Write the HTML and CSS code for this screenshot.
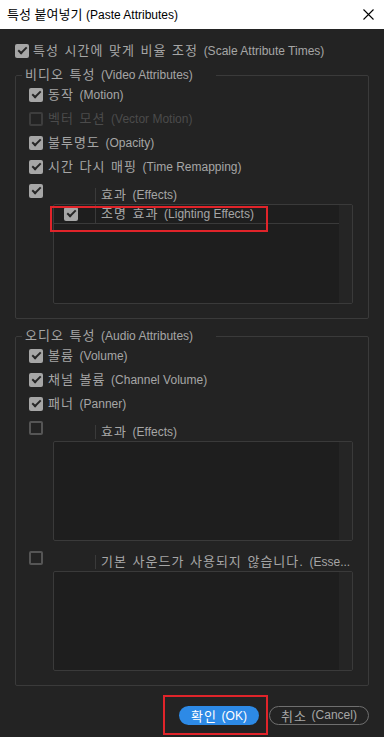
FILE: index.html
```html
<!DOCTYPE html>
<html lang="ko">
<head>
  <meta charset="UTF-8">
  <title>특성 붙여넣기</title>
  <link rel="stylesheet" href="styles.css">
</head>
<body>
<div class="titlebar">
  <span>특성 붙여넣기 <span class="en">(Paste Attributes)</span></span>
  <svg class="close" width="11" height="11" viewBox="0 0 11 11">
    <path d="M0.5 0.5 L10.5 10.5 M10.5 0.5 L0.5 10.5" stroke="#000" stroke-width="1.1" fill="none"/>
  </svg>
</div>

<div class="dialog">
  <div class="check top-check"><span class="box on"></span>특성 시간에 맞게 비율 조정 <span class="en">(Scale Attribute Times)</span></div>

  <!--비디오 특성-->
  <fieldset class="group">
    <legend>비디오 특성 <span class="en">(Video Attributes)</span></legend>
    <div class="check"><span class="box on"></span>동작 <span class="en">(Motion)</span></div>
    <div class="check dim"><span class="box off"></span>벡터 모션 <span class="en">(Vector Motion)</span></div>
    <div class="check"><span class="box on"></span>불투명도 <span class="en">(Opacity)</span></div>
    <div class="check"><span class="box on"></span>시간 다시 매핑 <span class="en">(Time Remapping)</span></div>
    <div class="listhead"><span class="box on"></span><span class="col">효과 <span class="en">(Effects)</span></span></div>
    <div class="list">
      <div class="list-main">
        <div class="list-row marked"><span class="box on"></span><span class="col">조명 효과 <span class="en">(Lighting Effects)</span></span></div>
      </div>
      <div class="list-scroll"></div>
    </div>
  </fieldset>

  <!--오디오 특성-->
  <fieldset class="group audio">
    <legend>오디오 특성 <span class="en">(Audio Attributes)</span></legend>
    <div class="check"><span class="box on"></span>볼륨 <span class="en">(Volume)</span></div>
    <div class="check"><span class="box on"></span>채널 볼륨 <span class="en">(Channel Volume)</span></div>
    <div class="check"><span class="box on"></span>패너 <span class="en">(Panner)</span></div>
    <div class="listhead"><span class="box off"></span><span class="col">효과 <span class="en">(Effects)</span></span></div>
    <div class="list">
      <div class="list-main"></div>
      <div class="list-scroll"></div>
    </div>
    <div class="listhead second"><span class="box off"></span><span class="col">기본 사운드가 사용되지 않습니다. <span class="en">(Esse...</span></span></div>
    <div class="list">
      <div class="list-main"></div>
      <div class="list-scroll"></div>
    </div>
  </fieldset>

  <div class="buttons">
    <div class="ok-mark"><button class="btn btn-ok">확인 <span class="en">(OK)</span></button></div>
    <button class="btn btn-cancel">취소 <span class="en">(Cancel)</span></button>
  </div>
</div>
</body>
</html>
```

FILE: styles.css
```css
*{
  margin: 0;
  padding: 0;
  box-sizing: border-box;
}
body{
  width: 384px;
  height: 737px;
  overflow: hidden;
  background: #232323;
  font-family: "Liberation Sans", "Noto Sans CJK KR", sans-serif;
  font-size: 13px;
  line-height: 16px;
  color: #a6a6a6;
}
.en{
  font-size: 12px;
  letter-spacing: 0;
  word-spacing: 0;
}
/*제목 표시줄*/
.titlebar{
  height: 29px;
  background: #fff;
  color: #000;
  display: flex;
  align-items: center;
  justify-content: space-between;
  padding: 0 10px 0 7px;
}
.close{
  margin-top: -1px;
}
.dialog{
  padding: 0 15px;
  letter-spacing: 1px;
  word-spacing: 1px;
}
.check{
  display: flex;
  align-items: center;
  height: 24px;
  white-space: pre;
}
.top-check{
  margin-top: 10px;
}
.top-check .box{
  margin-right: 4px;
}
/*체크박스*/
.box{
  position: relative;
  flex: none;
  width: 14px;
  height: 14px;
  border-radius: 2px;
  background: #a6a6a6;
  margin-right: 5px;
}
.box.on::after{
  content: "";
  position: absolute;
  left: 3px;
  top: 3px;
  width: 7px;
  height: 3px;
  border-left: 2px solid #262626;
  border-bottom: 2px solid #262626;
  transform: rotate(-45deg);
}
.box.off{
  background: transparent;
  border: 2px solid #555;
}
.dim{
  color: #4b4b4b;
}
.dim .box.off{
  border-color: #3d3d3d;
}
/*그룹 상자*/
.group{
  border: 1px solid #3a3a3a;
  border-radius: 2px;
  padding: 0 14px 14px 13px;
  margin-top: 4px;
}
.group.audio{
  margin-top: 9px;
}
.group legend{
  width: 194px;
  margin-left: -7px;
  padding: 0 3px;
  line-height: 16px;
  white-space: nowrap;
}
.listhead{
  display: flex;
  align-items: flex-start;
  height: 25px;
}
.listhead.second{
  margin-top: 5px;
}
.listhead .box{
  margin: 5px 0 0 0;
}
.listhead .col{
  margin: 9px 0 0 52px;
}
.col{
  border-left: 1px solid #3a3a3a;
  padding-left: 5px;
  height: 14px;
  line-height: 14px;
  white-space: nowrap;
}
/*목록*/
.list{
  display: flex;
  margin-left: 24px;
  width: 300px;
  height: 100px;
  border: 1px solid #3a3a3a;
  border-radius: 2px;
  background: #1e1e1e;
}
.list-main{
  flex: 1;
}
.list-scroll{
  width: 13px;
  background: #252525;
}
.list-row{
  position: relative;
  display: flex;
  align-items: center;
  height: 19px;
  border-bottom: 1px solid #3a3a3a;
  padding-left: 10px;
}
.list-row .box{
  margin: 0;
}
.list-row .col{
  margin-left: 17px;
  height: 18px;
  line-height: 18px;
}
.marked::after{
  content: "";
  position: absolute;
  left: -4px;
  top: 1px;
  width: 214px;
  height: 22px;
  border: 2px solid #e0242a;
}
/*버튼*/
.buttons{
  display: flex;
  justify-content: flex-end;
  align-items: center;
  margin-top: 9px;
}
.ok-mark{
  border: 2px solid #e0242a;
  padding: 9px 7px 8px 14px;
}
.btn{
  display: flex;
  align-items: center;
  justify-content: center;
  height: 19px;
  border-radius: 10px;
  font-family: inherit;
  font-size: 13px;
  letter-spacing: 1px;
  white-space: pre;
}
.btn-ok{
  width: 80px;
  background: #2d8ae6;
  border: none;
  color: #fff;
}
.btn-cancel{
  width: 100px;
  margin-left: 1px;
  background: transparent;
  border: 1px solid #6f6f6f;
  color: #a6a6a6;
}
```
